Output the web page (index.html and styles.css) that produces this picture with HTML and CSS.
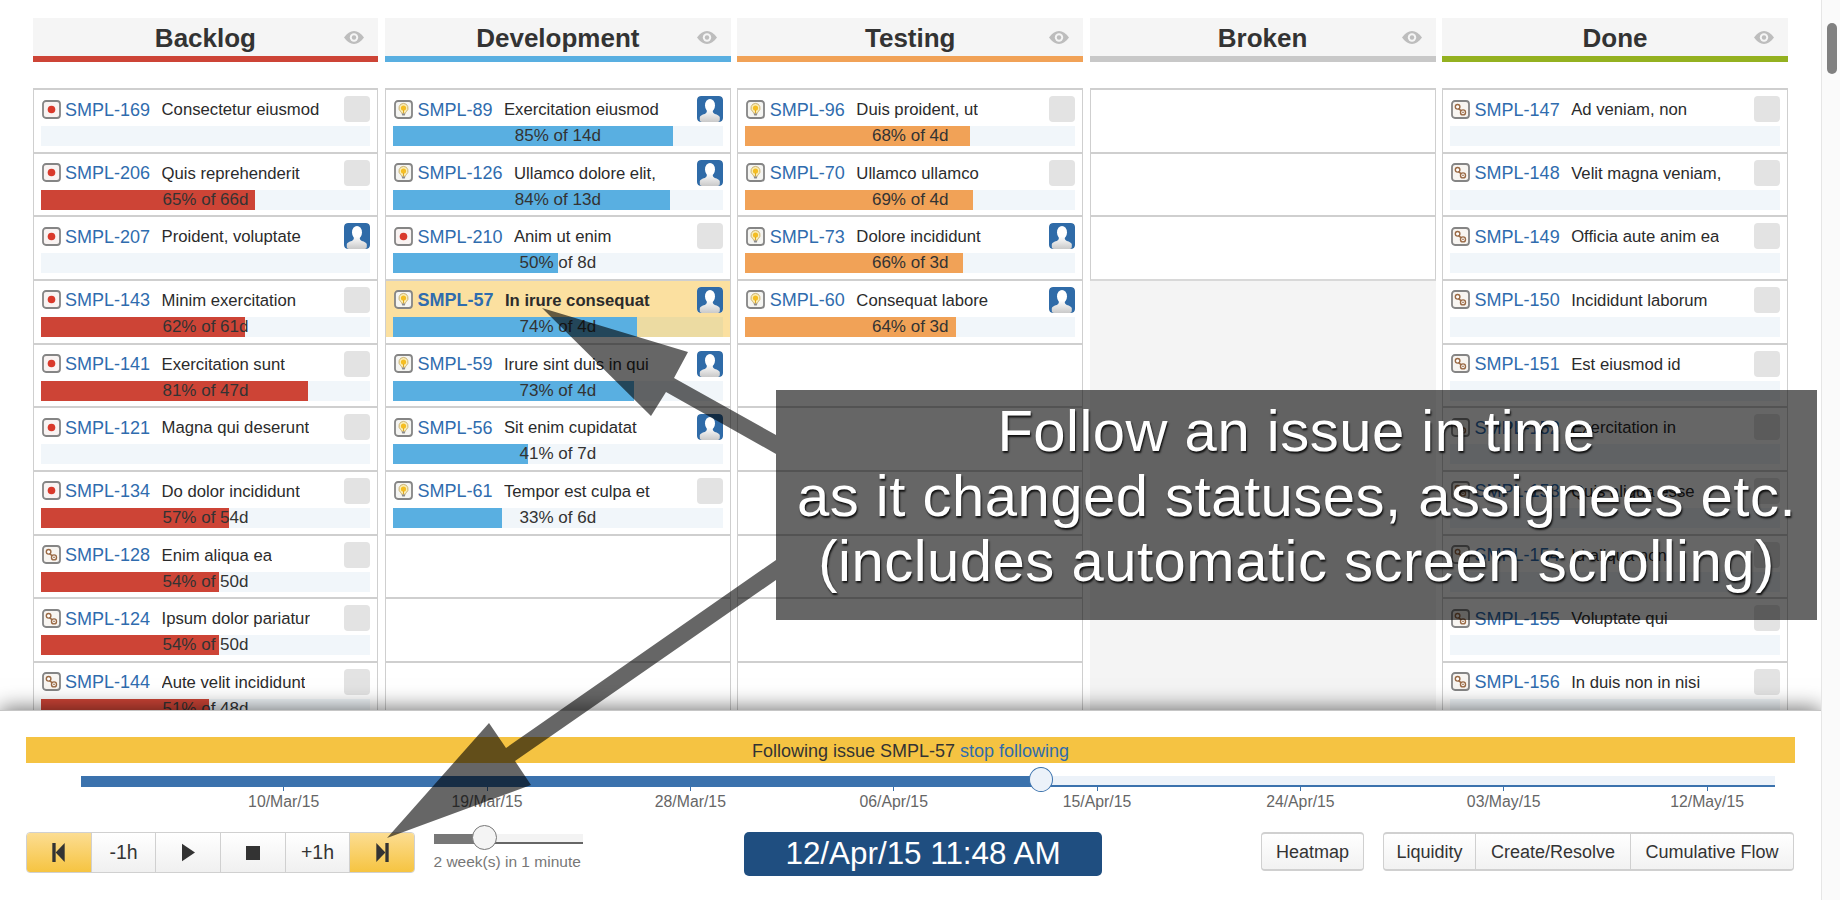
FILE: index.html
```html
<!DOCTYPE html>
<html lang="en">
<head>
<meta charset="utf-8">
<title>Issue timeline board</title>
<link rel="stylesheet" href="styles.css">
</head>
<body>
<svg class="defs" width="0" height="0" aria-hidden="true">
  <defs>
    <linearGradient id="torso" x1="0" y1="0" x2="0" y2="1"><stop offset="0" stop-color="#ffffff"/><stop offset="1" stop-color="#c9c9c9"/></linearGradient>
    <symbol id="bug" viewBox="0 0 19 19"><rect x="1" y="1" width="17" height="17" rx="3" fill="#f9f3f2" stroke="#858585" stroke-width="1.8"/><circle cx="9.5" cy="9.500" r="3.800" fill="#d9392b"/></symbol>
    <symbol id="idea" viewBox="0 0 19 19"><rect x="1" y="1" width="17" height="17" rx="3" fill="#f5f5f2" stroke="#858585" stroke-width="1.8"/><path d="M9.500 3.400a4.600 4.600 0 0 0-2.800 8.200c.6.500.8 1 .9 1.700h3.800c.1-.7.3-1.200.9-1.700a4.600 4.600 0 0 0-2.800-8.200z" fill="#faeeb8" stroke="#bfa25a" stroke-width=".8"/><circle cx="9.500" cy="8" r="2.600" fill="#f4bd22"/><path d="M9.500 10v3" stroke="#e0a820" stroke-width="1"/><rect x="7.900" y="13.600" width="3.200" height="1.800" rx=".6" fill="#8d8d8d"/></symbol>
    <symbol id="task" viewBox="0 0 19 19"><rect x="1" y="1" width="17" height="17" rx="3" fill="#f8f5f1" stroke="#858585" stroke-width="1.8"/><path d="M7.200 8.400 11.200 11.600" stroke="#9a6a45" stroke-width="1.400"/><circle cx="6.600" cy="6.800" r="2.300" fill="#fff" stroke="#9a6a45" stroke-width="1.400"/><circle cx="12" cy="12.400" r="2.500" fill="#fff" stroke="#9a6a45" stroke-width="1.400"/><circle cx="12" cy="12.400" r=".8" fill="#9a6a45"/></symbol>
    <symbol id="person" viewBox="0 0 26 26"><rect width="26" height="26" rx="4" fill="#2f6ba8"/><ellipse cx="13" cy="9.400" rx="5" ry="6.400" fill="#fff"/><path d="M9.700 13.500c.4 2 .1 3.200-1.200 4-2 1.100-5.200 1.600-5.700 3.800V24a2 2 0 0 0 2 2h16a2 2 0 0 0 2-2v-2.700c-.5-2.200-3.700-2.700-5.700-3.800-1.300-.8-1.600-2-1.200-4z" fill="url(#torso)"/></symbol>
    <symbol id="eye" viewBox="0 0 20 13"><path d="M0 6.500C3 2.200 6.300 0 10 0s7 2.200 10 6.500C17 10.800 13.700 13 10 13S3 10.800 0 6.500z" fill="#bdbdbd"/><circle cx="10" cy="6.500" r="4.200" fill="#f5f5f5"/><circle cx="10" cy="6.500" r="2.200" fill="#bdbdbd"/></symbol>
  </defs>
</svg>

<div class="page">
  <main class="main">
    <div class="board">

      <section class="col">
        <header class="colhead head-red"><h2 class="title">Backlog</h2><svg class="eye"><use href="#eye"/></svg></header>
        <div class="list red">
          <div class="card"><div class="in"><div class="row"><svg class="ic"><use href="#bug"/></svg><a class="key">SMPL-169</a><span class="sum">Consectetur eiusmod</span><span class="av"></span></div><div class="track"></div></div></div>
          <div class="card"><div class="in"><div class="row"><svg class="ic"><use href="#bug"/></svg><a class="key">SMPL-206</a><span class="sum">Quis reprehenderit</span><span class="av"></span></div><div class="track"><div class="fill" style="width:65%"></div><span class="pct">65% of 66d</span></div></div></div>
          <div class="card"><div class="in"><div class="row"><svg class="ic"><use href="#bug"/></svg><a class="key">SMPL-207</a><span class="sum">Proident, voluptate</span><svg class="av"><use href="#person"/></svg></div><div class="track"></div></div></div>
          <div class="card"><div class="in"><div class="row"><svg class="ic"><use href="#bug"/></svg><a class="key">SMPL-143</a><span class="sum">Minim exercitation</span><span class="av"></span></div><div class="track"><div class="fill" style="width:62%"></div><span class="pct">62% of 61d</span></div></div></div>
          <div class="card"><div class="in"><div class="row"><svg class="ic"><use href="#bug"/></svg><a class="key">SMPL-141</a><span class="sum">Exercitation sunt</span><span class="av"></span></div><div class="track"><div class="fill" style="width:81%"></div><span class="pct">81% of 47d</span></div></div></div>
          <div class="card"><div class="in"><div class="row"><svg class="ic"><use href="#bug"/></svg><a class="key">SMPL-121</a><span class="sum">Magna qui deserunt</span><span class="av"></span></div><div class="track"></div></div></div>
          <div class="card"><div class="in"><div class="row"><svg class="ic"><use href="#bug"/></svg><a class="key">SMPL-134</a><span class="sum">Do dolor incididunt</span><span class="av"></span></div><div class="track"><div class="fill" style="width:57%"></div><span class="pct">57% of 54d</span></div></div></div>
          <div class="card"><div class="in"><div class="row"><svg class="ic"><use href="#task"/></svg><a class="key">SMPL-128</a><span class="sum">Enim aliqua ea</span><span class="av"></span></div><div class="track"><div class="fill" style="width:54%"></div><span class="pct">54% of 50d</span></div></div></div>
          <div class="card"><div class="in"><div class="row"><svg class="ic"><use href="#task"/></svg><a class="key">SMPL-124</a><span class="sum">Ipsum dolor pariatur</span><span class="av"></span></div><div class="track"><div class="fill" style="width:54%"></div><span class="pct">54% of 50d</span></div></div></div>
          <div class="card"><div class="in"><div class="row"><svg class="ic"><use href="#task"/></svg><a class="key">SMPL-144</a><span class="sum">Aute velit incididunt</span><span class="av"></span></div><div class="track"><div class="fill" style="width:51%"></div><span class="pct">51% of 48d</span></div></div></div>
        </div>
      </section>

      <section class="col">
        <header class="colhead head-blue"><h2 class="title">Development</h2><svg class="eye"><use href="#eye"/></svg></header>
        <div class="list blue">
          <div class="card"><div class="in"><div class="row"><svg class="ic"><use href="#idea"/></svg><a class="key">SMPL-89</a><span class="sum">Exercitation eiusmod</span><svg class="av"><use href="#person"/></svg></div><div class="track"><div class="fill" style="width:85%"></div><span class="pct">85% of 14d</span></div></div></div>
          <div class="card"><div class="in"><div class="row"><svg class="ic"><use href="#idea"/></svg><a class="key">SMPL-126</a><span class="sum">Ullamco dolore elit,</span><svg class="av"><use href="#person"/></svg></div><div class="track"><div class="fill" style="width:84%"></div><span class="pct">84% of 13d</span></div></div></div>
          <div class="card"><div class="in"><div class="row"><svg class="ic"><use href="#bug"/></svg><a class="key">SMPL-210</a><span class="sum">Anim ut enim</span><span class="av"></span></div><div class="track"><div class="fill" style="width:50%"></div><span class="pct">50% of 8d</span></div></div></div>
          <div class="card followed"><div class="in"><div class="row"><svg class="ic"><use href="#idea"/></svg><a class="key">SMPL-57</a><span class="sum">In irure consequat</span><svg class="av"><use href="#person"/></svg></div><div class="track"><div class="fill" style="width:74%"></div><span class="pct">74% of 4d</span></div></div></div>
          <div class="card"><div class="in"><div class="row"><svg class="ic"><use href="#idea"/></svg><a class="key">SMPL-59</a><span class="sum">Irure sint duis in qui</span><svg class="av"><use href="#person"/></svg></div><div class="track"><div class="fill" style="width:73%"></div><span class="pct">73% of 4d</span></div></div></div>
          <div class="card"><div class="in"><div class="row"><svg class="ic"><use href="#idea"/></svg><a class="key">SMPL-56</a><span class="sum">Sit enim cupidatat</span><svg class="av"><use href="#person"/></svg></div><div class="track"><div class="fill" style="width:41%"></div><span class="pct">41% of 7d</span></div></div></div>
          <div class="card"><div class="in"><div class="row"><svg class="ic"><use href="#idea"/></svg><a class="key">SMPL-61</a><span class="sum">Tempor est culpa et</span><span class="av"></span></div><div class="track"><div class="fill" style="width:33%"></div><span class="pct">33% of 6d</span></div></div></div>
          <div class="card"></div><div class="card"></div><div class="card"></div>
        </div>
      </section>

      <section class="col">
        <header class="colhead head-orange"><h2 class="title">Testing</h2><svg class="eye"><use href="#eye"/></svg></header>
        <div class="list orange">
          <div class="card"><div class="in"><div class="row"><svg class="ic"><use href="#idea"/></svg><a class="key">SMPL-96</a><span class="sum">Duis proident, ut</span><span class="av"></span></div><div class="track"><div class="fill" style="width:68%"></div><span class="pct">68% of 4d</span></div></div></div>
          <div class="card"><div class="in"><div class="row"><svg class="ic"><use href="#idea"/></svg><a class="key">SMPL-70</a><span class="sum">Ullamco ullamco</span><span class="av"></span></div><div class="track"><div class="fill" style="width:69%"></div><span class="pct">69% of 4d</span></div></div></div>
          <div class="card"><div class="in"><div class="row"><svg class="ic"><use href="#idea"/></svg><a class="key">SMPL-73</a><span class="sum">Dolore incididunt</span><svg class="av"><use href="#person"/></svg></div><div class="track"><div class="fill" style="width:66%"></div><span class="pct">66% of 3d</span></div></div></div>
          <div class="card"><div class="in"><div class="row"><svg class="ic"><use href="#idea"/></svg><a class="key">SMPL-60</a><span class="sum">Consequat labore</span><svg class="av"><use href="#person"/></svg></div><div class="track"><div class="fill" style="width:64%"></div><span class="pct">64% of 3d</span></div></div></div>
          <div class="card"></div><div class="card"></div><div class="card"></div><div class="card"></div><div class="card"></div><div class="card"></div>
        </div>
      </section>

      <section class="col">
        <header class="colhead head-gray"><h2 class="title">Broken</h2><svg class="eye"><use href="#eye"/></svg></header>
        <div class="list broken">
          <div class="card"></div><div class="card"></div><div class="card card-last"></div>
        </div>
      </section>

      <section class="col">
        <header class="colhead head-green"><h2 class="title">Done</h2><svg class="eye"><use href="#eye"/></svg></header>
        <div class="list green">
          <div class="card"><div class="in"><div class="row"><svg class="ic"><use href="#task"/></svg><a class="key">SMPL-147</a><span class="sum">Ad veniam, non</span><span class="av"></span></div><div class="track"></div></div></div>
          <div class="card"><div class="in"><div class="row"><svg class="ic"><use href="#task"/></svg><a class="key">SMPL-148</a><span class="sum">Velit magna veniam,</span><span class="av"></span></div><div class="track"></div></div></div>
          <div class="card"><div class="in"><div class="row"><svg class="ic"><use href="#task"/></svg><a class="key">SMPL-149</a><span class="sum">Officia aute anim ea</span><span class="av"></span></div><div class="track"></div></div></div>
          <div class="card"><div class="in"><div class="row"><svg class="ic"><use href="#task"/></svg><a class="key">SMPL-150</a><span class="sum">Incididunt laborum</span><span class="av"></span></div><div class="track"></div></div></div>
          <div class="card"><div class="in"><div class="row"><svg class="ic"><use href="#task"/></svg><a class="key">SMPL-151</a><span class="sum">Est eiusmod id</span><span class="av"></span></div><div class="track"></div></div></div>
          <div class="card"><div class="in"><div class="row"><svg class="ic"><use href="#task"/></svg><a class="key">SMPL-152</a><span class="sum">Exercitation in</span><span class="av"></span></div><div class="track"></div></div></div>
          <div class="card"><div class="in"><div class="row"><svg class="ic"><use href="#task"/></svg><a class="key">SMPL-153</a><span class="sum">Quis aliqua esse</span><span class="av"></span></div><div class="track"></div></div></div>
          <div class="card"><div class="in"><div class="row"><svg class="ic"><use href="#task"/></svg><a class="key">SMPL-154</a><span class="sum">Id aliqua non</span><span class="av"></span></div><div class="track"></div></div></div>
          <div class="card"><div class="in"><div class="row"><svg class="ic"><use href="#task"/></svg><a class="key">SMPL-155</a><span class="sum">Voluptate qui</span><span class="av"></span></div><div class="track"></div></div></div>
          <div class="card"><div class="in"><div class="row"><svg class="ic"><use href="#task"/></svg><a class="key">SMPL-156</a><span class="sum">In duis non in nisi</span><span class="av"></span></div><div class="track"></div></div></div>
        </div>
      </section>
    </div>

    <div class="panel">
      <div class="banner">Following issue SMPL-57 <a class="link">stop following</a></div>
      <div class="timeline">
        <div class="rail"><div class="elapsed"></div><div class="remaining"></div><span class="knob"></span></div>
        <div class="scale">
          <span class="tick">10/Mar/15</span><span class="tick">19/Mar/15</span><span class="tick">28/Mar/15</span><span class="tick">06/Apr/15</span><span class="tick">15/Apr/15</span><span class="tick">24/Apr/15</span><span class="tick">03/May/15</span><span class="tick">12/May/15</span>
        </div>
      </div>
      <div class="controls">
        <div class="transport">
          <button class="tbtn on"><svg class="tic" viewBox="0 0 13 20"><rect x="0" y="0" width="3.500" height="20" fill="#333"/><path d="M3.500 10 13 0v20z" fill="#333"/></svg></button>
          <button class="tbtn">-1h</button>
          <button class="tbtn"><svg class="tic" viewBox="0 0 15 20"><path d="M0 0l15 10L0 20z" fill="#333"/></svg></button>
          <button class="tbtn"><svg class="tic-stop" viewBox="0 0 14 14"><rect width="14" height="14" fill="#333"/></svg></button>
          <button class="tbtn">+1h</button>
          <button class="tbtn on"><svg class="tic" viewBox="0 0 13 20"><path d="M0 0l9.500 10L0 20z" fill="#333"/><rect x="9.500" y="0" width="3.500" height="20" fill="#333"/></svg></button>
        </div>
        <div class="speed">
          <div class="srail"><div class="sfill"></div><div class="srest"></div><span class="sknob"></span></div>
          <div class="slabel">2 week(s) in 1 minute</div>
        </div>
        <div class="clock">12/Apr/15 11:48 AM</div>
        <button class="cbtn solo">Heatmap</button>
        <div class="charts"><button class="cbtn c1">Liquidity</button><button class="cbtn c2">Create/Resolve</button><button class="cbtn c3">Cumulative Flow</button></div>
      </div>
    </div>

    <svg class="arrows" viewBox="0 0 1840 900" aria-hidden="true">
      <polygon points="542,308 688,352 674,378 776,435 776,454 666,392 651,416"/>
      <polygon points="387,838 489,723 506,748 776,560 776,580 515,761 531,785"/>
    </svg>
    <div class="callout">Follow an issue in time<br>as it changed statuses, assignees etc.<br>(includes automatic screen scrolling)</div>
  </main>
  <aside class="scrollbar"><div class="thumb"></div></aside>
</div>
</body>
</html>
```
FILE: styles.css
```css
* { box-sizing: border-box; }
html, body { margin: 0; height: 100%; overflow: hidden; }
body { font-family: "Liberation Sans", Arial, sans-serif; color: #333; background: #fff; }
.defs { position: absolute; }

.page { display: flex; width: 1840px; height: 900px; }
.main { position: relative; flex: 1; height: 900px; overflow: hidden; }

.scrollbar { width: 19px; height: 900px; padding: 23px 4px 0 5px; background: #fafafa; border-left: 1px solid #e6e6e6; }
.thumb { width: 10px; height: 51px; border-radius: 5px; background: #808080; }

/* board */
.board { display: grid; grid-template-columns: repeat(5, 1fr); gap: 0 6.5px; width: 1755.5px; height: 900px; margin-left: 32.5px; padding-top: 18px; }
.col { display: flex; flex-direction: column; min-width: 0; }
.colhead { display: grid; grid-template-columns: 1fr auto 1fr; align-items: center; height: 44px; background: #f5f5f5; border-bottom: 6px solid #ccc; }
.title { grid-column: 2; margin: 0; padding-top: 1px; font-size: 26px; line-height: 38px; font-weight: 700; color: #333; }
.eye { grid-column: 3; justify-self: end; width: 20px; height: 13px; margin-right: 14px; }
.head-red { border-bottom-color: #cd4436; }
.head-blue { border-bottom-color: #59afe1; }
.head-orange { border-bottom-color: #f1a257; }
.head-gray { border-bottom-color: #c8c8c8; }
.head-green { border-bottom-color: #94b120; }

.list { flex: 1; margin-top: 26px; }
.broken { background: #f4f4f4; }
.card { height: 63.67px; padding-bottom: 5.67px; background: #fff; border: solid #cfcfcf; border-width: 2px 1px 0; }
.card-last { height: 65.67px; border-bottom: 2px solid #d8d8d8; }
.in { height: 100%; padding: 6px 7px 0; }
.row { display: flex; align-items: center; height: 26px; margin-bottom: 4px; white-space: nowrap; }
.ic { flex: none; width: 19px; height: 19px; margin-left: 1px; }
.key { margin-left: 4.5px; padding-top: 2px; font-size: 18px; color: #2f6cae; }
.sum { margin-left: 11.5px; padding-top: 2px; font-size: 16.7px; color: #2b2b2b; overflow: hidden; }
.av { flex: none; width: 26px; height: 26px; margin-left: auto; border-radius: 4px; background: #e3e3e3; }
.track { display: grid; height: 20px; background: #f1f6fa; }
.fill { grid-area: 1 / 1; height: 20px; }
.pct { grid-area: 1 / 1; font-size: 17px; line-height: 20px; text-align: center; color: #333; }
.red .fill { background: #cd4436; }
.blue .fill { background: #59afe1; }
.orange .fill { background: #f1a257; }
.followed .in { background: #fbe0a0; }
.followed .key, .followed .sum { font-weight: 700; }
.followed .track { background: #ecdba2; }

/* bottom panel */
.panel { position: absolute; left: 0; right: 0; bottom: 0; height: 190px; padding: 26px 26px 0; background: #fff; border-top: 1px solid #c6c6c6; box-shadow: 0 -2px 20px rgba(0, 0, 0, .55); }
.banner { height: 26px; background: #f5c342; font-size: 18px; line-height: 28px; text-align: center; color: #333; }
.link { color: #2f6cae; }
.timeline { margin: 13px 0 0 54.5px; width: 1694px; }
.rail { position: relative; display: flex; height: 11px; }
.elapsed { width: 960.5px; background: #3b72ad; }
.remaining { flex: 1; background: #ecf2f9; border-bottom: 2px solid #3b72ad; }
.knob { position: absolute; left: 948.5px; top: -9px; width: 24px; height: 25px; border-radius: 50%; background: #ecf2f9; border: 1px solid #3b72ad; }
.scale { display: flex; padding-left: 101.5px; }
.tick { flex: none; width: 203.35px; padding-top: 6px; font-size: 15.8px; line-height: 18px; text-align: center; color: #666; background: linear-gradient(#3b72ad, #3b72ad) center top / 1px 4px no-repeat; }

.controls { display: flex; align-items: flex-start; margin-top: 21px; }
.transport { display: flex; flex: none; width: 389px; height: 41px; border: 1px solid #d0d0d0; border-radius: 4px; overflow: hidden; }
.tbtn { display: flex; align-items: center; justify-content: center; flex: 1; margin: 0; padding: 0; font: 19.5px "Liberation Sans", Arial, sans-serif; color: #333; background: linear-gradient(#fff, #f0f0f0); border: 0; border-left: 1px solid #d0d0d0; }
.tbtn:first-child { border-left: 0; }
.tbtn.on { background: linear-gradient(#fcdd92, #f6c441); }
.tic { width: 13px; height: 19px; }
.tic-stop { width: 14px; height: 14px; }

.speed { flex: none; width: 149px; margin: 2px 0 0 18.5px; }
.srail { position: relative; display: flex; height: 10px; }
.sfill { width: 50px; background: #777; }
.srest { flex: 1; background: #f3f3f3; border-bottom: 2px solid #666; }
.sknob { position: absolute; left: 38px; top: -9px; width: 25px; height: 25px; border-radius: 50%; background: #f4f4f4; border: 1px solid #777; }
.slabel { margin-top: 9px; font-size: 15.5px; line-height: 18px; color: #777; white-space: nowrap; }

.clock { flex: none; width: 358px; height: 44px; margin-left: 161.5px; border-radius: 5px; background: #1f4e80; font-size: 31.4px; line-height: 44px; text-align: center; color: #fff; }
.cbtn { height: 39px; margin: 0; padding: 2px 0 0; font: 18px "Liberation Sans", Arial, sans-serif; color: #333; background: linear-gradient(#fff, #f2f2f2); border: 1px solid #d0d0d0; border-top-width: 2px; border-bottom-width: 2px; }
.solo { flex: none; width: 103px; margin-left: 159px; border-radius: 4px; }
.charts { display: flex; flex: none; width: 411px; margin-left: 19px; }
.c1 { width: 93px; border-radius: 4px 0 0 4px; }
.c2 { width: 155px; border-left: 0; }
.c3 { flex: 1; border-left: 0; border-radius: 0 4px 4px 0; }

/* annotation layer */
.arrows { position: absolute; left: 0; top: 0; width: 1840px; height: 900px; pointer-events: none; }
.arrows polygon { fill: rgba(0, 0, 0, .6); }
.callout { position: absolute; left: 776px; top: 390px; width: 1041px; height: 230px; padding-top: 8px; background: rgba(0, 0, 0, .6); font-size: 58px; letter-spacing: .5px; line-height: 65px; text-align: center; color: #fff; text-shadow: 1px 2px 2px rgba(0, 0, 0, .85); white-space: nowrap; }
```
